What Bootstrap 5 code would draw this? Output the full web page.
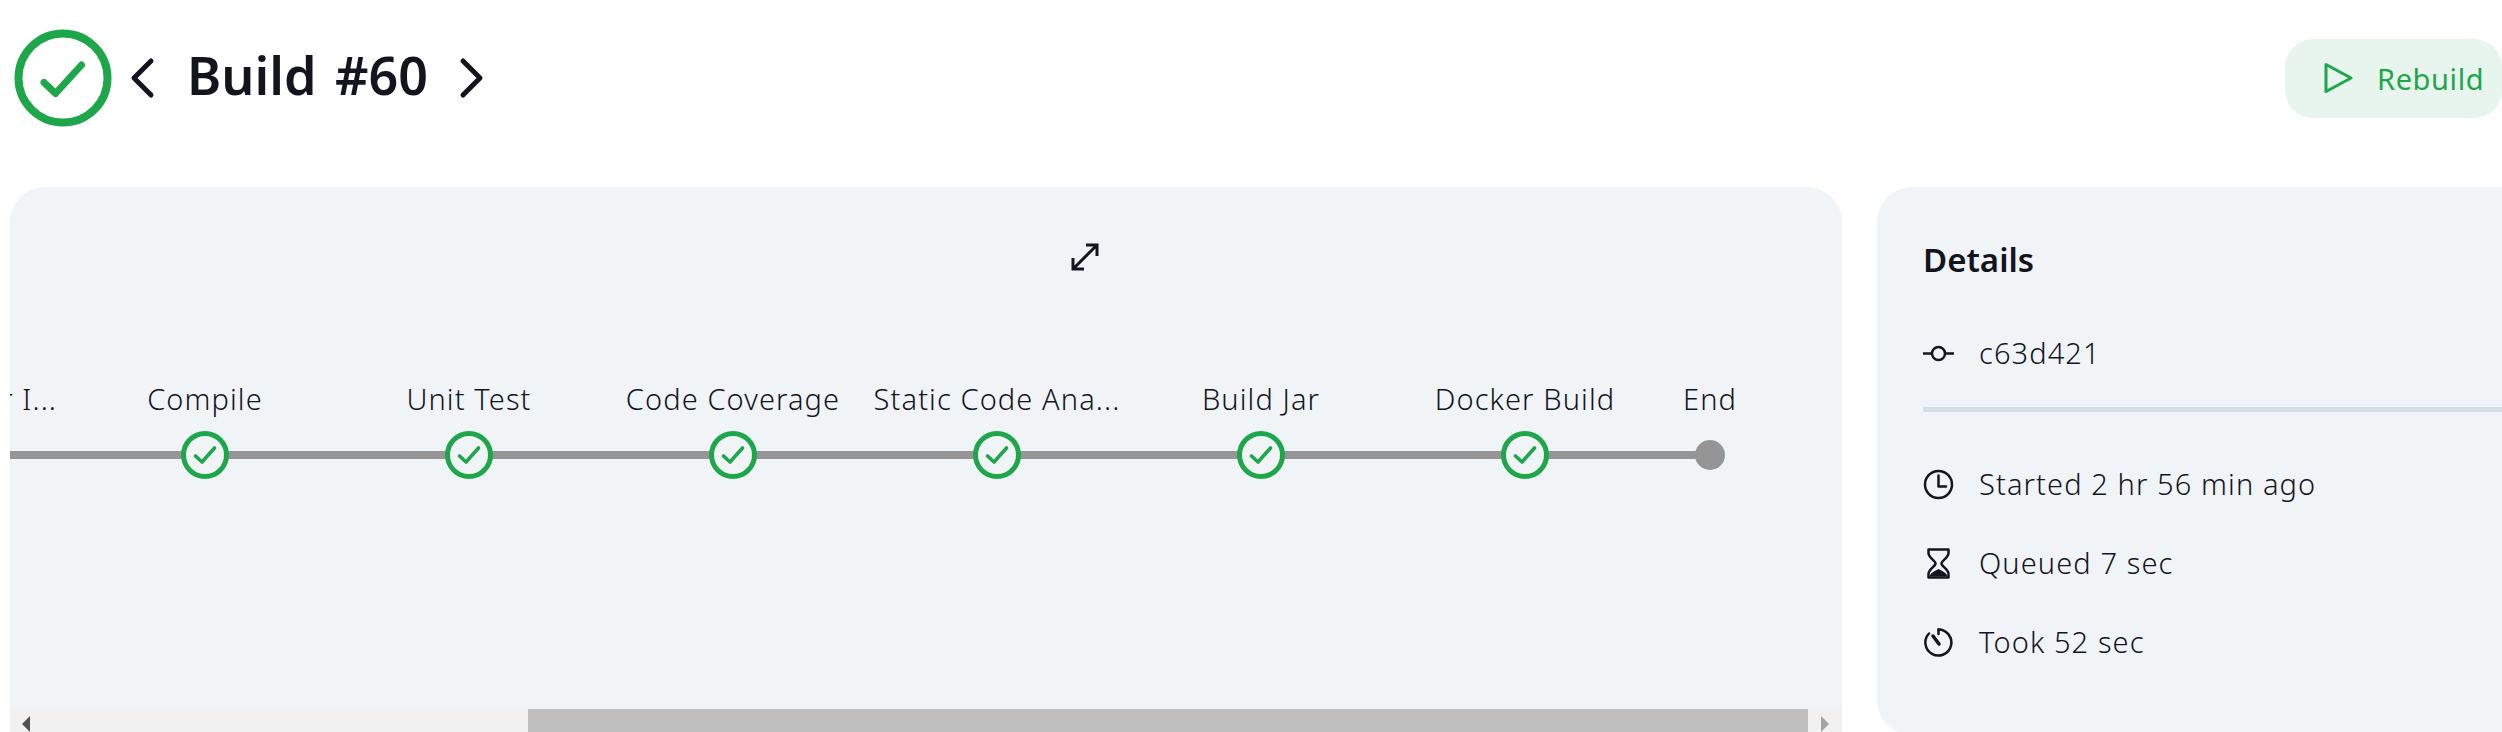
<!DOCTYPE html>
<html lang="en">
<head>
<meta charset="utf-8">
<title>Build #60</title>
<link href="https://cdn.jsdelivr.net/npm/bootstrap@5.3.0/dist/css/bootstrap.min.css" rel="stylesheet">
<style>
html,body{height:732px;overflow:hidden;background:#fff}
body{font-family:"Noto Sans","Open Sans",sans-serif;font-size:29px;font-weight:350;letter-spacing:1.1px;word-spacing:0;color:#14141f}
.shell{width:2502px;height:732px;overflow:hidden;padding-left:10px}
.topbar{height:156px;margin-bottom:31px}
.status-ic{width:98px;height:98px;margin-left:4px;flex:none}
.chev{width:36px;height:44px;flex:none}
.chev-l{margin-left:13px}
.chev-r{margin-left:25px}
.build-title{font-size:52px;font-weight:600;letter-spacing:0;word-spacing:5px;margin:-6px 0 0 26px;line-height:1.2;color:#14141f;white-space:nowrap}
.rebuild{background:#e8f5ee;color:#1ea64b;font-size:29px;font-weight:400;letter-spacing:.6px;border:0;border-radius:28px;height:79px;width:217px;padding:0 0 0 39px;gap:24px;white-space:nowrap}
.rebuild:hover,.rebuild:active{background:#e8f5ee;color:#1ea64b}
.rebuild span{position:relative;top:1px}
.main-zone{height:548px;gap:35px}
.graph-panel{width:1832px;flex:none;background:#f0f4f7;border-radius:35px 35px 0 0;position:relative;overflow:hidden}
.expand-btn{position:absolute;left:1059px;top:45px;width:32px;height:32px}
.graph-canvas{flex:1 1 auto;overflow:hidden;padding-top:193px}
.stage-row{position:relative;margin-left:-201px;width:2200px}
.stage-line{position:absolute;left:0;top:71px;height:8px;width:1901px;background:#959595}
.stage{flex:0 0 264px;position:relative;text-align:center}
.stage-end{flex:0 0 106px}
.stage-label{height:51px;line-height:38px;white-space:nowrap;color:#14141f}
.stage-node{width:48px;height:48px;display:block;margin:0 auto;position:relative}
.end-dot{width:30px;height:30px;border-radius:50%;background:#959595;margin:0 auto;position:relative;top:9px}
.fake-bar{height:28px;flex:none;background:#f1f1f1;position:relative}
.fake-thumb{position:absolute;left:518px;width:1280px;top:2px;bottom:0;background:#bfbfbf}
.arrow-l,.arrow-r{position:absolute;top:9px;width:0;height:0;border-top:8px solid transparent;border-bottom:8px solid transparent}
.arrow-l{left:12px;border-right:8px solid #505050}
.arrow-r{left:1811px;border-left:8px solid #a3a3a3}
.detail-card{width:700px;flex:none;background:#f0f4f7;border:0;border-radius:35px;padding:50px 46px}
.detail-title{font-size:33px;font-weight:600;letter-spacing:0;margin:0;line-height:46px;color:#14141f}
.detail-row{gap:25px;height:40px;color:#14141f;white-space:nowrap}
.detail-ic{width:31px;height:31px;flex:none}
.detail-rule{height:5px;width:100%;background:#d6deea;border:0;opacity:1;margin:0 0 0 -2px}
.commit-row{margin:50px 0 34px}
.time-rows{gap:39px;padding:52px 0 0}
</style>
</head>
<body>
<div class="shell">
  <header class="topbar d-flex align-items-center">
    <svg class="status-ic" viewBox="0 0 98 98" fill="none" stroke="#1ea64b" aria-hidden="true">
      <circle cx="49" cy="49" r="44.500" stroke-width="8"/>
      <path d="M30 53.500L41.500 64.500L67.500 36" stroke-width="7" stroke-linecap="round" stroke-linejoin="round"/>
    </svg>
    <svg class="chev chev-l" viewBox="0 0 36 44" fill="none" stroke="#14141f" stroke-width="5" stroke-linecap="round" stroke-linejoin="round" aria-hidden="true">
      <path d="M26 5L9 22L26 39"/>
    </svg>
    <h1 class="build-title">Build #60</h1>
    <svg class="chev chev-r" viewBox="0 0 36 44" fill="none" stroke="#14141f" stroke-width="5" stroke-linecap="round" stroke-linejoin="round" aria-hidden="true">
      <path d="M10 5L27 22L10 39"/>
    </svg>
    <button type="button" class="btn rebuild ms-auto d-flex align-items-center">
      <svg width="29" height="32" viewBox="0 0 29 32" fill="none" stroke="#1ea64b" stroke-width="3" stroke-linejoin="round" aria-hidden="true"><path d="M2 2.500L27 16L2 29.500Z"/></svg>
      <span>Rebuild</span>
    </button>
  </header>

  <main class="main-zone d-flex">
    <section class="graph-panel d-flex flex-column">
      <div class="graph-canvas">
        <div class="stage-row d-flex">
          <div class="stage-line"></div>
          <div class="stage"><div class="stage-label">Build: Docker I...</div><svg class="stage-node" viewBox="0 0 48 48"><circle cx="24" cy="24" r="21.500" fill="#f0f4f7" stroke="#1ea64b" stroke-width="5"/><path d="M14.500 25L21 31L33.500 17" fill="none" stroke="#1ea64b" stroke-width="3.600" stroke-linecap="round" stroke-linejoin="round"/></svg></div>
          <div class="stage"><div class="stage-label">Compile</div><svg class="stage-node" viewBox="0 0 48 48"><circle cx="24" cy="24" r="21.500" fill="#f0f4f7" stroke="#1ea64b" stroke-width="5"/><path d="M14.500 25L21 31L33.500 17" fill="none" stroke="#1ea64b" stroke-width="3.600" stroke-linecap="round" stroke-linejoin="round"/></svg></div>
          <div class="stage"><div class="stage-label">Unit Test</div><svg class="stage-node" viewBox="0 0 48 48"><circle cx="24" cy="24" r="21.500" fill="#f0f4f7" stroke="#1ea64b" stroke-width="5"/><path d="M14.500 25L21 31L33.500 17" fill="none" stroke="#1ea64b" stroke-width="3.600" stroke-linecap="round" stroke-linejoin="round"/></svg></div>
          <div class="stage"><div class="stage-label">Code Coverage</div><svg class="stage-node" viewBox="0 0 48 48"><circle cx="24" cy="24" r="21.500" fill="#f0f4f7" stroke="#1ea64b" stroke-width="5"/><path d="M14.500 25L21 31L33.500 17" fill="none" stroke="#1ea64b" stroke-width="3.600" stroke-linecap="round" stroke-linejoin="round"/></svg></div>
          <div class="stage"><div class="stage-label">Static Code Ana...</div><svg class="stage-node" viewBox="0 0 48 48"><circle cx="24" cy="24" r="21.500" fill="#f0f4f7" stroke="#1ea64b" stroke-width="5"/><path d="M14.500 25L21 31L33.500 17" fill="none" stroke="#1ea64b" stroke-width="3.600" stroke-linecap="round" stroke-linejoin="round"/></svg></div>
          <div class="stage"><div class="stage-label">Build Jar</div><svg class="stage-node" viewBox="0 0 48 48"><circle cx="24" cy="24" r="21.500" fill="#f0f4f7" stroke="#1ea64b" stroke-width="5"/><path d="M14.500 25L21 31L33.500 17" fill="none" stroke="#1ea64b" stroke-width="3.600" stroke-linecap="round" stroke-linejoin="round"/></svg></div>
          <div class="stage"><div class="stage-label">Docker Build</div><svg class="stage-node" viewBox="0 0 48 48"><circle cx="24" cy="24" r="21.500" fill="#f0f4f7" stroke="#1ea64b" stroke-width="5"/><path d="M14.500 25L21 31L33.500 17" fill="none" stroke="#1ea64b" stroke-width="3.600" stroke-linecap="round" stroke-linejoin="round"/></svg></div>
          <div class="stage stage-end"><div class="stage-label">End</div><div class="end-dot"></div></div>
        </div>
      </div>
      <a class="expand-btn d-block" href="#" aria-label="Expand">
        <svg width="32" height="32" viewBox="0 0 32 32" fill="none" stroke="#14141f" stroke-width="3" aria-hidden="true"><path d="M4 28L28 4M17 4H28V15M4 17V28H15"/></svg>
      </a>
      <div class="fake-bar"><span class="arrow-l"></span><span class="fake-thumb"></span><span class="arrow-r"></span></div>
    </section>

    <aside class="card detail-card">
      <h2 class="detail-title">Details</h2>
      <div class="detail-row commit-row d-flex align-items-center">
        <svg class="detail-ic" viewBox="0 0 31 31" fill="none" stroke="#14141f" stroke-width="2.500"><circle cx="15.500" cy="15.500" r="6.500"/><path d="M0 15.500H9M22 15.500H31"/></svg>
        <span>c63d421</span>
      </div>
      <hr class="detail-rule">
      <ul class="time-rows list-unstyled d-flex flex-column m-0">
        <li class="detail-row d-flex align-items-center">
          <svg class="detail-ic" viewBox="0 0 31 31" fill="none" stroke="#14141f" stroke-width="2.500" stroke-linecap="round" stroke-linejoin="round"><circle cx="15.500" cy="15.500" r="13.500"/><path d="M15.500 6.500V17.500H23"/></svg>
          <span>Started 2 hr 56 min ago</span>
        </li>
        <li class="detail-row d-flex align-items-center">
          <svg class="detail-ic" viewBox="0 0 31 31" fill="none" stroke="#14141f" stroke-width="2.500" stroke-linejoin="round"><path d="M5.500 1.500H25.500V5C25.500 10 18.500 12.500 18.500 15.500S25.500 21 25.500 26V29.500H5.500V26C5.500 21 12.500 18.500 12.500 15.500S5.500 10 5.500 5Z"/><path d="M6.500 28.500C7 25 12 23 15.500 21C19 23 24 25 24.500 28.500Z" fill="#14141f" stroke="none"/></svg>
          <span>Queued 7 sec</span>
        </li>
        <li class="detail-row d-flex align-items-center">
          <svg class="detail-ic" viewBox="0 0 31 31" fill="none" stroke="#14141f" stroke-width="2.500" stroke-linecap="round"><path d="M15.500 2.500A13 13 0 1 1 6 6.500"/><path d="M15.500 2.500V7"/><path d="M10 9L16 17" stroke-width="3.500"/></svg>
          <span>Took 52 sec</span>
        </li>
      </ul>
    </aside>
  </main>
</div>
</body>
</html>
